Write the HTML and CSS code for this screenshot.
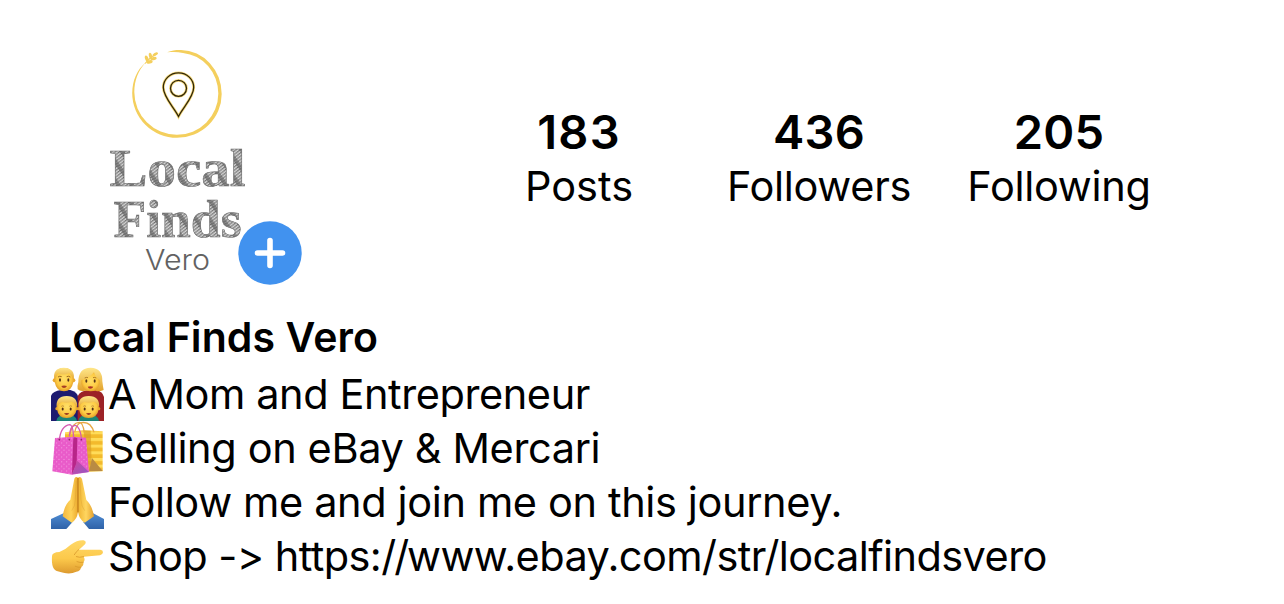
FILE: index.html
```html
<!DOCTYPE html>
<html lang="en">
<head>
<meta charset="utf-8">
<title>Local Finds Vero</title>
<link rel="stylesheet" href="styles.css">
</head>
<body>
<main class="profile">
  <header class="top">
    <svg class="avatar" viewBox="49 40 256 250" role="img" aria-label="Local Finds Vero">
      <defs>
        <pattern id="hatch" width="11" height="2.600" patternUnits="userSpaceOnUse" patternTransform="rotate(-35)">
          <rect width="11" height="2.600" fill="#d6d6d6"/>
          <path d="M0 .6L6 .9L11 .6M0 1.900L4 1.600" stroke="#606060" stroke-width="1" fill="none"/>
        </pattern>
      </defs>
      <path fill="#f4cf5d" d="M167 52.300C172 50.300 177 49.800 181 50A41.500 44 0 0 1 221.700 94A44.700 43.800 0 0 1 177 137.800A44.800 44.800 0 0 1 132.200 93C132.500 80 137 70 145.600 62.500C138 71 134.500 80 134.300 92A42.500 42.800 0 0 0 177 134.800A41.300 41.300 0 0 0 218.300 93.500A39 41 0 0 0 183 52.900C178 51.900 173 52 167 52.300Z"/>
      <g fill="#f4cf5d">
        <path d="M144.500 63.500Q149 57 157.500 53L158 53.700Q150 58 145.200 64Z"/>
        <ellipse cx="146.700" cy="58.500" rx="1.700" ry="3.200" transform="rotate(-18 146.700 58.500)"/>
        <ellipse cx="150.400" cy="55.700" rx="1.600" ry="3" transform="rotate(-12 150.400 55.700)"/>
        <ellipse cx="149.500" cy="61.800" rx="3.200" ry="1.700" transform="rotate(-12 149.500 61.800)"/>
        <ellipse cx="153.500" cy="58.600" rx="3.200" ry="1.600" transform="rotate(-12 153.500 58.600)"/>
        <ellipse cx="155.200" cy="54.300" rx="3" ry="1.400" transform="rotate(-30 155.200 54.300)"/>
      </g>
      <g fill="none" stroke="#f6d977" stroke-width="2.800">
        <path d="M178.500 116.500C174 107.500 163.300 97 163.300 87.500A15.200 14.700 0 0 1 193.700 87.500C193.700 97 183 107.500 178.500 116.500Z"/>
        <circle cx="178.500" cy="88.300" r="8"/>
      </g>
      <g fill="none" stroke="#30260b" stroke-width="1.300">
        <path d="M178.500 116.500C174 107.500 163.300 97 163.300 87.500A15.200 14.700 0 0 1 193.700 87.500C193.700 97 183 107.500 178.500 116.500Z"/>
        <circle cx="178.500" cy="88.300" r="8"/>
      </g>
      <g class="sketch" fill="url(#hatch)">
        <text x="109.500" y="186" textLength="136" lengthAdjust="spacingAndGlyphs">Local</text>
        <text x="113.500" y="236.500" textLength="128" lengthAdjust="spacingAndGlyphs">Finds</text>
      </g>
      <text class="vero" x="145" y="269.500" textLength="65" lengthAdjust="spacingAndGlyphs">Vero</text>
      <circle cx="270" cy="253" r="31.700" fill="#4192ef"/>
      <path d="M270 240.500V265.500M257.500 253H282.500" stroke="#fff" stroke-width="5.600" stroke-linecap="round"/>
    </svg>
    <dl class="stats">
      <div class="stat"><dd class="count posts">183</dd><dt class="label">Posts</dt></div>
      <div class="stat"><dd class="count">436</dd><dt class="label long">Followers</dt></div>
      <div class="stat"><dd class="count">205</dd><dt class="label long">Following</dt></div>
    </dl>
  </header>
  <section class="bio">
    <h1 class="name">Local Finds Vero</h1>
    <p class="line">
      <svg class="emoji" viewBox="15 15 165 162">
        <defs>
          <radialGradient id="skin" cx=".5" cy=".45" r=".6"><stop offset="0" stop-color="#ffdf68"/><stop offset=".65" stop-color="#fdca43"/><stop offset="1" stop-color="#dc9422"/></radialGradient>
          <linearGradient id="hair" x2="0" y2="1"><stop offset="0" stop-color="#ffe78a"/><stop offset="1" stop-color="#e2a12a"/></linearGradient>
          <g id="kid">
            <path d="M48 177Q50 158 79 158T110 177Z" fill="#1d8577"/>
            <circle cx="50" cy="140" r="5" fill="#e8a72e"/><circle cx="109" cy="140" r="5" fill="#e8a72e"/>
            <path d="M50 136Q50 106 79 106T109 136V142Q105 168 79 168T50 141Z" fill="url(#skin)"/>
            <path d="M49 138Q45 102 79 102Q114 102 110 138Q105 123 94 119Q78 125 66 120Q53 125 49 138Z" fill="url(#hair)"/>
            <ellipse cx="67" cy="141" rx="3" ry="4.500" fill="#573014"/><ellipse cx="91" cy="141" rx="3" ry="4.500" fill="#573014"/>
            <path d="M63 133Q67 130 71 133M87 133Q91 130 95 133" fill="none" stroke="#a16b20" stroke-width="2"/>
            <path d="M71 154Q79 152 87 154Q84 159 79 159T71 154Z" fill="#9d3c20"/>
          </g>
        </defs>
        <path d="M18 177V101Q24 87 48 84H76Q98 89 101 109V177Z" fill="#1d1b70"/>
        <path d="M98 177V103Q105 86 130 84H153Q173 88 177 105V177Z" fill="#9c2227"/>
        <circle cx="29" cy="55" r="6" fill="#eba92e"/><circle cx="85" cy="55" r="6" fill="#eba92e"/>
        <path d="M29 47Q30 18 57 18T85 47V60Q80 88 57 88T29 60Z" fill="url(#skin)"/>
        <path d="M28 53Q22 18 56 17Q92 18 86 54L81 43Q75 40 73 33Q54 42 38 33Q34 44 28 53Z" fill="url(#hair)"/>
        <g fill="#56351a"><ellipse cx="45" cy="54" rx="3" ry="5"/><ellipse cx="70" cy="54" rx="3" ry="5"/></g>
        <path d="M39 45Q44 41 50 44M65 44Q71 41 76 45" fill="none" stroke="#a06b1e" stroke-width="3"/>
        <path d="M49 72Q57 69 66 72Q63 78 57 78T49 72Z" fill="#a63e23"/>
        <path d="M98 82Q96 74 100 60Q100 17 137 17Q173 18 172 58Q174 75 176 84Q160 91 152 86H119Q107 90 98 82Z" fill="url(#hair)"/>
        <path d="M109 55Q131 49 147 31Q152 48 164 54V65Q158 88 136 88T109 66Z" fill="url(#skin)"/>
        <g fill="#56351a"><ellipse cx="124" cy="57" rx="3" ry="5"/><ellipse cx="149" cy="57" rx="3" ry="5"/></g>
        <path d="M119 48Q124 45 129 47M144 47Q149 45 154 48" fill="none" stroke="#a06b1e" stroke-width="2.500"/>
        <path d="M128 74Q136 71 145 74Q142 80 136 80T128 74Z" fill="#ac3425"/>
        <use href="#kid" x="-14"/><use href="#kid" x="52"/>
      </svg><span class="t1">A Mom and Entrepreneur</span>
    </p>
    <p class="line">
      <svg class="emoji" viewBox="15 9 165 162">
        <defs>
          <linearGradient id="floor" x2="1" y2="1"><stop offset="0" stop-color="#d1449f"/><stop offset="1" stop-color="#9359c5"/></linearGradient>
          <pattern id="dots" width="15" height="14" patternUnits="userSpaceOnUse"><rect width="15" height="14" fill="#e95bc9"/><circle cx="5" cy="5" r="1.800" fill="#f7a3e4"/><circle cx="12" cy="12" r="1.800" fill="#f7a3e4"/></pattern>
          <pattern id="bands" width="60" height="20" patternUnits="userSpaceOnUse"><rect width="60" height="20" fill="#f3ba2c"/><rect width="60" height="9" fill="#ffdc59"/></pattern>
        </defs>
        <path d="M60 43L116 37L173 40V160L130 161L60 145Z" fill="url(#bands)"/>
        <path d="M116 38L123 121L132 160L140 140L137 38Z" fill="#d99b24" opacity=".65"/>
        <path d="M132 160L141 120L173 159Z" fill="#b98b43"/>
        <path d="M75 48Q82 14 102 13Q114 12 118 44M89 43Q95 16 109 14Q137 9 147 43" fill="none" stroke="#e7a844" stroke-width="4"/>
        <path d="M30 60L86 56L123 59L132 162L81 170L22 160Z" fill="url(#dots)"/>
        <path d="M85 57L97 60L95 137L81 169Z" fill="#b82689"/>
        <path d="M81 169L97 128L132 162Z" fill="url(#floor)"/>
        <path d="M43 67Q47 24 74 20Q84 20 86 61M73 55Q76 21 91 22Q105 25 110 64" fill="none" stroke="#d65bb2" stroke-width="4"/>
        <g fill="#8d286d"><circle cx="43" cy="65" r="2.500"/><circle cx="73" cy="65" r="2.500"/><circle cx="109" cy="65" r="2.500"/></g>
      </svg><span class="t2">Selling on eBay &amp; Mercari</span>
    </p>
    <p class="line">
      <svg class="emoji" viewBox="15 9 165 162">
        <defs>
          <linearGradient id="handL"><stop offset="0" stop-color="#f2b740"/><stop offset=".55" stop-color="#ffd359"/><stop offset="1" stop-color="#eba92d"/></linearGradient>
          <linearGradient id="handR"><stop offset="0" stop-color="#efb332"/><stop offset=".5" stop-color="#ffd660"/><stop offset="1" stop-color="#e4a02f"/></linearGradient>
          <linearGradient id="sleeve" x2="0" y2="1"><stop offset="0" stop-color="#4f8cd3"/><stop offset="1" stop-color="#2f62a8"/></linearGradient>
        </defs>
        <path d="M18 141L57 123L82 151L64 171H18Z" fill="url(#sleeve)"/>
        <path d="M177 141L143 123L115 151L132 171H177Z" fill="url(#sleeve)"/>
        <path d="M99 17Q91 12 88 20L76 83Q58 98 53 133L80 152Q96 143 99 120Z" fill="url(#handL)"/>
        <path d="M99 17Q107 12 111 21L124 84Q141 99 147 133L119 152Q103 143 99 120Z" fill="url(#handR)"/>
        <path d="M99 18V121" fill="none" stroke="#a9640f" stroke-width="2.500"/>
        <path d="M94 26L91 83Q91 103 80 116M105 26L108 83Q109 104 119 116" fill="none" stroke="#c98a24" stroke-width="1.500" opacity=".5"/>
      </svg><span class="t3">Follow me and join me on this journey.</span>
    </p>
    <p class="line">
      <svg class="emoji" viewBox="15 -3 165 162">
        <defs><linearGradient id="point" x2="0" y2="1"><stop offset="0" stop-color="#ffd867"/><stop offset=".55" stop-color="#fcc94b"/><stop offset="1" stop-color="#dd9a2f"/></linearGradient></defs>
        <path d="M21 78Q22 67 43 66Q60 60 77 44Q99 29 116 31Q126 34 120 43L102 59L166 59Q174 60 174 67Q173 75 165 76L116 80Q122 89 115 97Q117 107 108 112Q107 124 94 125Q76 134 55 128L38 124Q18 120 21 78Z" fill="url(#point)"/>
        <path d="M101 59Q92 66 88 74M116 80Q103 84 94 80M115 97Q105 99 96 95M108 112Q99 113 91 109" fill="none" stroke="#d99a2d" stroke-width="2.500" stroke-linecap="round"/>
      </svg><span class="t4">Shop -&gt; https:<span class="slashes">//</span>www.ebay.com/str/localfindsvero</span>
    </p>
  </section>
</main>
</body>
</html>
```
FILE: styles.css
```css
* { box-sizing: border-box; }
body, dl, dd, p, h1 { margin: 0; }
body {
  background: #fff;
  color: #000;
  font-family: Inter, "Liberation Sans", sans-serif;
  font-feature-settings: "calt" 0;
}
.profile {
  width: 1284px;
  height: 604px;
  padding: 40px 49px 0;
  overflow: hidden;
}
.top { display: flex; height: 270px; }
.avatar { width: 256px; height: 250px; flex: none; }
.sketch {
  font: bold 53px "Liberation Serif", serif;
  stroke: #686868;
  stroke-width: .6px;
}
.vero { font: 300 28px Inter, sans-serif; fill: #626262; }
.stats {
  display: grid;
  grid-template-columns: repeat(3, 240px);
  margin-left: 154px;
  padding-top: 64px;
  height: max-content;
  text-align: center;
}
.count { font-size: 47px; font-weight: 600; line-height: 55px; letter-spacing: .2px; }
.count.posts { letter-spacing: 1.2px; }
.label { font-size: 41.500px; line-height: 54px; }
.long { letter-spacing: -.3px; }
.bio { font-size: 41.500px; }
.name { font-size: 41px; font-weight: 600; line-height: 54px; height: 57px; letter-spacing: .1px; }
.line { display: flex; height: 54px; line-height: 54px; white-space: nowrap; }
.emoji { width: 55px; height: 54px; margin: 0 3px 0 1px; flex: none; }
.t1 { letter-spacing: -.42px; }
.t2, .t3 { letter-spacing: -.37px; }
.t4 { letter-spacing: -.58px; }
.slashes { letter-spacing: -2px; }
```
